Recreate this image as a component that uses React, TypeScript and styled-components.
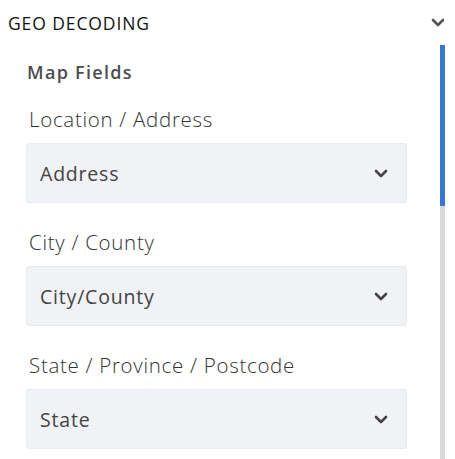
import styled, { createGlobalStyle } from 'styled-components'

const GlobalStyle = createGlobalStyle`
  body {
    margin: 0;
    background: #fff;
    font-family: 'Open Sans', 'Liberation Sans', sans-serif;
  }
`

const Panel = styled.div`
  width: 455px;
  height: 459px;
  overflow: hidden;
`

const Header = styled.div`
  height: 45px;
  display: flex;
  align-items: center;
  justify-content: space-between;
  padding: 0 10px 0 8px;
`

const Title = styled.span`
  font-size: 17.5px;
  color: #111;
  letter-spacing: 0.9px;
  padding-top: 1px;
`

const Body = styled.div`
  display: flex;
  padding-left: 26px;
`

const Content = styled.div`
  width: 381px;
  padding-top: 14px;
`

const SectionTitle = styled.div`
  font-size: 18px;
  font-weight: 600;
  color: #4d4d4d;
  line-height: 26px;
  letter-spacing: 1.3px;
  padding-left: 1px;
`

const Field = styled.div<{ $first?: boolean }>`
  margin-top: ${({ $first }) => ($first ? '19px' : '24px')};
`

const Label = styled.div`
  font-size: 20.5px;
  font-weight: 300;
  color: #333;
  line-height: 30px;
  letter-spacing: 0.7px;
  padding-left: 3px;
  margin-bottom: 9px;
`

const Select = styled.div`
  box-sizing: border-box;
  height: 60px;
  display: flex;
  align-items: center;
  justify-content: space-between;
  padding: 0 18px 0 13px;
  background: #f0f2f5;
  border: 1px solid #e8ebef;
  border-radius: 3px;
  font-size: 19.5px;
  letter-spacing: 0.8px;
  color: #444;
`

const Track = styled.div`
  margin-left: 33px;
  width: 5px;
  height: 414px;
  background: #d9d9d9;
`

const Thumb = styled.div`
  height: 161px;
  background: #3a75cf;
`

const Chevron = ({ color }: { color: string }) => (
  <svg width="14" height="9" viewBox="0 0 14 9">
    <path d="M2 2 L7 7 L12 2" fill="none" stroke={color} strokeWidth="2.6" strokeLinecap="round" strokeLinejoin="round" />
  </svg>
)

const fields = [
  { label: 'Location / Address', value: 'Address' },
  { label: 'City / County', value: 'City/County' },
  { label: 'State / Province / Postcode', value: 'State' },
]

function App() {
  return (
    <Panel>
      <GlobalStyle />
      <Header>
        <Title>GEO DECODING</Title>
        <Chevron color="#555" />
      </Header>
      <Body>
        <Content>
          <SectionTitle>Map Fields</SectionTitle>
          {fields.map((f, i) => (
            <Field key={f.label} $first={i === 0}>
              <Label>{f.label}</Label>
              <Select>
                <span>{f.value}</span>
                <Chevron color="#444" />
              </Select>
            </Field>
          ))}
        </Content>
        <Track>
          <Thumb />
        </Track>
      </Body>
    </Panel>
  )
}

export default App
